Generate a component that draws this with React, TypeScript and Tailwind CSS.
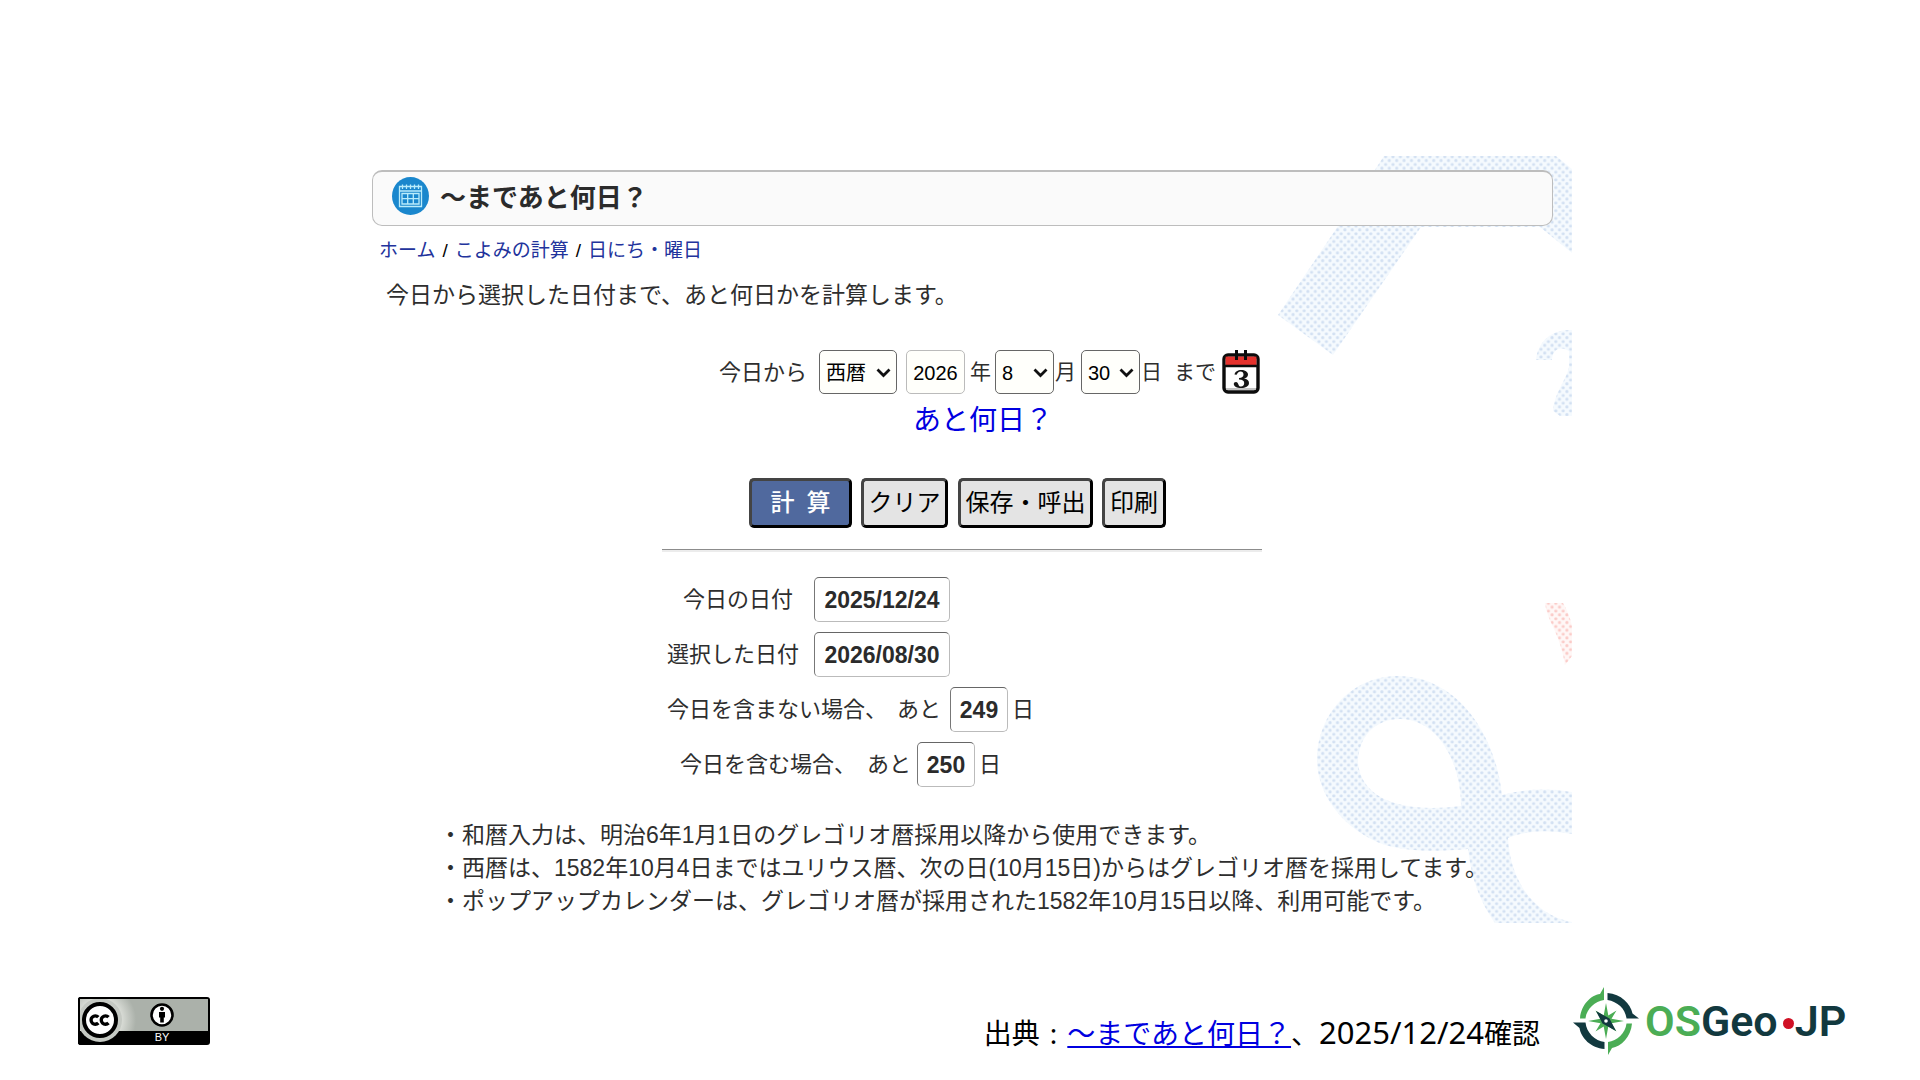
import type { ReactNode } from "react";

const jp = "font-['Liberation_Sans','Noto_Sans_CJK_JP',sans-serif]";

function Watermark() {
  return (
    <svg
      className="pointer-events-none absolute right-0 top-0"
      width="300"
      height="768"
      viewBox="1272 154 300 768"
      aria-hidden="true"
    >
      <defs>
        <pattern id="blueDots" width="7.4" height="7.7" patternUnits="userSpaceOnUse">
          <rect width="7.4" height="7.7" fill="#f5fafe" />
          <rect x="0.4" y="0.4" width="2.8" height="2.8" rx="0.8" fill="#d2e0f2" />
          <rect x="4.1" y="4.2" width="2.8" height="2.8" rx="0.8" fill="#d2e0f2" />
        </pattern>
        <pattern id="redDots" width="7.4" height="7.7" patternUnits="userSpaceOnUse">
          <rect width="7.4" height="7.7" fill="#fff7f6" />
          <rect x="0.4" y="0.4" width="2.8" height="2.8" rx="0.8" fill="#fbcbc8" />
          <rect x="4.1" y="4.2" width="2.8" height="2.8" rx="0.8" fill="#fbcbc8" />
        </pattern>
      </defs>
      <g fill="url(#blueDots)">
        <path d="M1384 155H1556L1572 168V252L1540 226H1421L1333 354L1278 314L1336 228Z" />
        <path d="M1572 329C1552 328 1538 340 1536 359H1552C1552 349 1560 344 1569 350V366C1566 380 1554 392 1553 410L1560 415H1572Z" />
        <path
          fillRule="evenodd"
          d="M1398 675C1455 675 1495 730 1502 794Q1535 785 1572 791V833Q1535 826 1508 837C1510 880 1535 915 1572 921V922H1495C1480 900 1472 880 1468 848C1440 850 1415 852 1385 844C1345 830 1317 795 1317 758C1318 712 1352 675 1398 675ZM1400 718C1375 718 1358 736 1358 762C1362 800 1405 812 1461 805C1461 760 1437 718 1400 718Z"
        />
      </g>
      <path fill="url(#redDots)" d="M1545 602H1563Q1569 612 1572 625V655L1565 664Q1562 645 1554 628Q1546 612 1545 602Z" />
    </svg>
  );
}

function TitleIcon() {
  return (
    <svg width="38" height="38" viewBox="0 0 38 38" aria-hidden="true">
      <ellipse cx="18.5" cy="19" rx="18.5" ry="19" fill="#1a87cd" />
      <g fill="none" stroke="#b9ecfb" strokeWidth="1.3">
        <path d="M7.5 9.5H29.5V29.5H7.5Z" />
        <path d="M7.5 14H29.5M10 16.5H27V27H10ZM10 21.7H27M15.700 16.5V27M21.300 16.5V27" />
        <path d="M10.5 7.5V12M14.5 7.5V12M18.5 7.5V12M22.5 7.5V12M26.5 7.5V12" />
      </g>
    </svg>
  );
}

function CalendarIcon() {
  return (
    <svg width="38" height="44" viewBox="0 0 38 44" aria-hidden="true">
      <rect x="2" y="5" width="34" height="37" rx="4" fill="#fff" stroke="#0c0c0c" strokeWidth="3.4" />
      <path d="M3.6 6.6H34.4V15H3.6Z" fill="#e5322d" />
      <path d="M2 16H36" stroke="#0c0c0c" strokeWidth="2.4" />
      <path d="M4 39H34" stroke="#b5b5b5" strokeWidth="1.6" />
      <path d="M14.5 0V10M23.5 0V10" stroke="#0c0c0c" strokeWidth="3" />
      <path
        d="M12.5 24.5C13 21.5 16 20 19 20C23 20 26 21.8 26 24.6C26 26.8 24.3 28.1 22 28.6C25 29 27 30.6 27 33C27 36.2 23.5 38 19 38C15 38 12 36.6 11.8 34.2C11.7 32.9 12.7 32 14 32C16.8 32 15.8 36.6 19 36.6C21 36.6 22.2 35.2 22.2 33C22.2 30.6 20.6 29.4 17 29.4V28C20 28 21.5 26.8 21.5 24.6C21.5 22.8 20.4 21.6 18.6 21.6C16.4 21.6 15.6 23 14.6 24.8Z"
        fill="#151515"
      />
    </svg>
  );
}

function Picker({ label, options, className }: { label: string; options: string[]; className: string }) {
  return (
    <span className={`relative block h-[44px] ${className}`}>
      <select
        aria-label={label}
        className="h-full w-full appearance-none rounded-[5px] border border-[#666] bg-[#fffffb] pl-[6px] pt-[2px] text-[20px] text-black"
      >
        {options.map((o) => (
          <option key={o}>{o}</option>
        ))}
      </select>
      <svg className="pointer-events-none absolute right-[6px] top-[18px]" width="15" height="10" viewBox="0 0 15 10" aria-hidden="true">
        <path d="M1.5 1.5L7.5 7.5L13.5 1.5" fill="none" stroke="#111" strokeWidth="2.8" />
      </svg>
    </span>
  );
}

function ToolButton({ className, children }: { className: string; children: ReactNode }) {
  return (
    <button
      type="button"
      className={`h-[50px] whitespace-pre rounded-[5px] border-[3px] border-b-black border-l-[#444] border-r-black border-t-[#444] text-[24px] leading-[44px] ${className}`}
    >
      {children}
    </button>
  );
}

function ResultBox({ id, value, className }: { id: string; value: string; className: string }) {
  return (
    <input
      id={id}
      readOnly
      defaultValue={value}
      className={`h-[45px] rounded-[5px] border border-b-[#bbb] border-l-[#777] border-r-[#bbb] border-t-[#666] bg-white pt-[2px] text-center text-[23px] font-bold text-[#2b2b2b] ${className}`}
    />
  );
}

function CcBadge() {
  return (
    <svg width="132" height="48" viewBox="0 0 132 48" role="img" aria-label="CC BY">
      <defs>
        <radialGradient id="halo" gradientUnits="userSpaceOnUse" cx="22" cy="23" r="36">
          <stop offset="0.6" stopColor="#d9dcd6" />
          <stop offset="1" stopColor="#abb1aa" />
        </radialGradient>
        <clipPath id="badgeClip">
          <rect width="132" height="48" rx="3" />
        </clipPath>
      </defs>
      <g clipPath="url(#badgeClip)">
        <rect width="132" height="48" fill="#000" />
        <rect x="2" y="2" width="128" height="32" fill="url(#halo)" />
        <circle cx="22" cy="23" r="22" fill="#c5c9c3" />
        <path d="M0 0H2V48H0Z" />
        <path d="M0 46H50V48H0ZM0 0H50V2H0Z" />
        <circle cx="22" cy="23" r="16" fill="#fff" stroke="#000" strokeWidth="4" />
        <g fill="none" stroke="#000" strokeWidth="3.4">
          <path d="M20.3 20.2A4.2 4.2 0 1 0 20.3 26" />
          <path d="M30.5 20.2A4.2 4.2 0 1 0 30.5 26" />
        </g>
        <circle cx="84" cy="18" r="10.5" fill="#fff" stroke="#000" strokeWidth="2.6" />
        <circle cx="84" cy="11.8" r="2.1" />
        <path d="M81 15H87V20.5H85.8V25.5H82.2V20.5H81Z" />
        <text x="84" y="44" textAnchor="middle" fontSize="11" fontFamily="Liberation Sans" fill="#fff">
          BY
        </text>
      </g>
    </svg>
  );
}

function Compass() {
  return (
    <svg width="66" height="68" viewBox="0 0 66 68" aria-hidden="true">
      <g fill="#4bad55">
        <path d="M7 31.500C8 18 18 8 27 7L31 0V13C22 14 13.500 22 12.500 31.500Z" />
        <path d="M59 36.500C58 50 48 59.500 39 61L35 68V55C44 54 52.500 46 53.500 36.500Z" />
      </g>
      <g fill="#12393f">
        <path d="M34.500 6C48 7 57.500 16.500 59.500 26.500L66 31.500H53.500C52.500 22 44.500 14.500 34.500 13Z" />
        <path d="M31.500 62C18 61 8 51 6.500 41L0 35.500H12.500C13.500 45.500 22 54 31.500 55Z" />
      </g>
      <path
        d="M33 16L35.300 28.500L43.500 23.500L38.500 31.700L51 34L38.500 36.300L43.500 44.500L35.300 39.500L33 52L30.700 39.500L22.500 44.500L27.500 36.300L15 34L27.500 31.700L22.500 23.500L30.700 28.500Z"
        fill="#4bad55"
      />
      <path d="M23 24L36.500 31.500L43 44L29.500 36.500Z" fill="#12393f" />
      <circle cx="33" cy="34" r="1.8" fill="#fff" />
    </svg>
  );
}

export default function App() {
  return (
    <div className={`flex min-h-screen flex-col bg-white text-[#2e2e2e] ${jp}`}>
      <main className="pl-[18px] pt-[155px]">
        <section className="relative mx-auto min-h-[767px] w-full max-w-[1206px]">
          <Watermark />
          <div className="relative pl-[6px] pt-[15px]">
            <header className="mr-[19px] flex h-[56px] items-center gap-[10px] rounded-[10px] border border-t-2 border-[#bdbdbd] bg-[#fafafa] pl-[19px]">
              <span className="mb-[6px]">
                <TitleIcon />
              </span>
              <h1 className="mb-[2px] text-[26px] font-bold leading-[32px] text-[#2b2b2b]">～まであと何日？</h1>
            </header>

            <nav className="ml-[7px] mt-[11px] flex gap-[7px] text-[19px] leading-[28px] text-black" aria-label="パンくず">
              <a href="#home" className="text-[#22339c]">ホーム</a>
              <span>/</span>
              <a href="#calc" className="text-[#22339c]">こよみの計算</a>
              <span>/</span>
              <a href="#days" className="text-[#22339c]">日にち・曜日</a>
            </nav>
            <p className="ml-[14px] mt-[14px] text-[23px] leading-[32px]">
              今日から選択した日付まで、あと何日かを計算します。
            </p>

            <form className="mt-[38px]">
              <div className="ml-[347px] flex h-[46px] items-center text-[21px]">
                <span className="w-[100px] text-[22px]">今日から</span>
                <Picker label="暦" options={["西暦", "和暦"]} className="w-[78px]" />
                <input
                  aria-label="年"
                  defaultValue="2026"
                  className="ml-[9px] h-[44px] w-[59px] rounded-[5px] border border-[#bbb] bg-[#fffffb] pt-[2px] text-center text-[20px] text-black"
                />
                <span className="ml-[5px] w-[25px]">年</span>
                <Picker label="月" options={["8"]} className="w-[59px]" />
                <span className="ml-px w-[26px]">月</span>
                <Picker label="日" options={["30"]} className="w-[59px]" />
                <span className="ml-px w-[33px]">日</span>
                <span className="w-[48px]">まで</span>
                <button type="button" aria-label="カレンダー">
                  <CalendarIcon />
                </button>
              </div>
              <p className="ml-[541px] mt-[8px] text-[28px] leading-[36px] text-[#0000e0]">あと何日？</p>

              <div className="ml-[377px] mt-[39px] flex">
                <ToolButton className="w-[103px] bg-[#50699e] font-medium text-white">計&ensp;算</ToolButton>
                <ToolButton className="ml-[9px] w-[87px] bg-[#e4e4e4] text-black">クリア</ToolButton>
                <ToolButton className="ml-[10px] w-[135px] bg-[#e4e4e4] text-black">保存・呼出</ToolButton>
                <ToolButton className="ml-[9px] w-[64px] bg-[#e4e4e4] text-black">印刷</ToolButton>
              </div>
            </form>

            <hr className="ml-[290px] mt-[21px] h-[3px] w-[600px] border-0 border-t border-[#8c8c8c] bg-[#ececec]" />

            <div className="ml-[295px] mt-[25px] flex flex-col gap-[10px] text-[22px] leading-[32px]">
              <div className="flex items-center pl-[16px]">
                <label htmlFor="today" className="w-[131px]">今日の日付</label>
                <ResultBox id="today" value="2025/12/24" className="w-[136px]" />
              </div>
              <div className="flex items-center">
                <label htmlFor="target" className="w-[147px]">選択した日付</label>
                <ResultBox id="target" value="2026/08/30" className="w-[136px]" />
              </div>
              <div className="flex items-center">
                <label htmlFor="excl" className="flex w-[283px]">
                  <span className="w-[230px]">今日を含まない場合、</span>あと
                </label>
                <ResultBox id="excl" value="249" className="w-[58px]" />
                <span className="ml-[4px]">日</span>
              </div>
              <div className="flex items-center pl-[13px]">
                <label htmlFor="incl" className="flex w-[237px]">
                  <span className="w-[187px]">今日を含む場合、</span>あと
                </label>
                <ResultBox id="incl" value="250" className="w-[58px]" />
                <span className="ml-[4px]">日</span>
              </div>
            </div>

            <div className="ml-[67px] mt-[32px] text-[23px] leading-[33px]">
              <p>・和暦入力は、明治6年1月1日のグレゴリオ暦採用以降から使用できます。</p>
              <p>・西暦は、1582年10月4日まではユリウス暦、次の日(10月15日)からはグレゴリオ暦を採用してます。</p>
              <p>・ポップアップカレンダーは、グレゴリオ暦が採用された1582年10月15日以降、利用可能です。</p>
            </div>
          </div>
        </section>
      </main>

      <footer className="mt-auto flex items-start pb-[25px] pl-[78px] pr-[74px]">
        <span className="mt-[10px]">
          <CcBadge />
        </span>
        <p className="ml-auto mt-[25px] font-['Noto_Sans','Noto_Sans_CJK_JP',sans-serif] text-[28px] leading-[40px] text-black">
          出典<span className="mx-[10px]">:</span>
          <a href="#source" className="text-[#0000e0] underline underline-offset-2">～まであと何日？</a>、
          <span className="text-[31px]">2025/12/24</span>確認
        </p>
        <div className="ml-[33px] flex items-center">
          <Compass />
          <span className="ml-[6px] flex w-[201px] items-center font-[Roboto,sans-serif] text-[43px] font-semibold leading-[68px] text-[#12393f]">
            <span className="text-[#4bad55]">OS</span>Geo
            <span className="ml-[5px] mr-px mt-[4px] size-[11px] shrink-0 rounded-full bg-[#d01125]" />
            JP
          </span>
        </div>
      </footer>
    </div>
  );
}
